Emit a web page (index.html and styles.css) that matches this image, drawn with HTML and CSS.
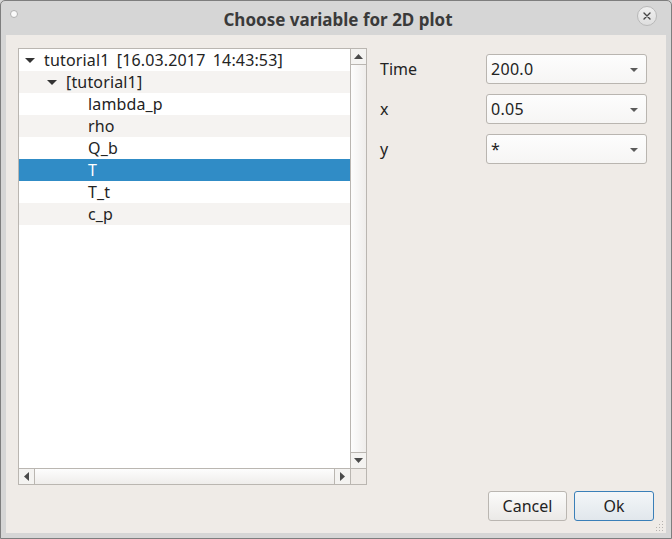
FILE: index.html
```html
<!DOCTYPE html>
<html>
<head>
<meta charset="utf-8">
<link rel="stylesheet" href="styles.css">
</head>
<body>
<div class="window">
  <div class="titlebar">
    <span class="dot"></span>
    <span class="title">Choose variable for 2D plot</span>
    <span class="close"><svg width="8" height="8" viewBox="0 0 8 8"><path d="M1 1L7 7M7 1L1 7" stroke="#444" stroke-width="1.4" stroke-linecap="round"/></svg></span>
  </div>
  <div class="client">
    <div class="main">
      <div class="tree">
        <div class="viewport">
          <div class="row"><span class="exp"></span>tutorial1 [16.03.2017 14:43:53]</div>
          <div class="row alt lvl1"><span class="exp"></span>[tutorial1]</div>
          <div class="row lvl2">lambda_p</div>
          <div class="row alt lvl2">rho</div>
          <div class="row lvl2">Q_b</div>
          <div class="row sel lvl2">T</div>
          <div class="row lvl2">T_t</div>
          <div class="row alt lvl2">c_p</div>
        </div>
        <div class="vscroll">
          <div class="sbtn up"><svg width="9" height="5" viewBox="0 0 9 5"><path d="M4.5 0L9 5H0Z" fill="#4a4a4a"/></svg></div>
          <div class="trough-v"></div>
          <div class="sbtn down"><svg width="9" height="5" viewBox="0 0 9 5"><path d="M0 0H9L4.5 5Z" fill="#4a4a4a"/></svg></div>
        </div>
        <div class="hscroll">
          <div class="sbtn left"><svg width="5" height="9" viewBox="0 0 5 9"><path d="M5 0V9L0 4.5Z" fill="#4a4a4a"/></svg></div>
          <div class="trough-h"></div>
          <div class="sbtn right"><svg width="5" height="9" viewBox="0 0 5 9"><path d="M0 0L5 4.5L0 9Z" fill="#4a4a4a"/></svg></div>
        </div>
        <div class="corner"></div>
      </div>
      <div class="form">
        <div class="field"><span class="label">Time</span><div class="combo"><span>200.0</span><span class="arrow"></span></div></div>
        <div class="field"><span class="label">x</span><div class="combo"><span>0.05</span><span class="arrow"></span></div></div>
        <div class="field"><span class="label">y</span><div class="combo"><span>*</span><span class="arrow"></span></div></div>
      </div>
    </div>
    <div class="buttons">
      <button class="btn">Cancel</button>
      <button class="btn default">Ok</button>
    </div>
    <svg class="grip" width="10" height="10" viewBox="0 0 10 10">
      <g fill="#b5b2ae">
        <rect x="8" y="0" width="1" height="1"/>
        <rect x="5" y="3" width="1" height="1"/><rect x="8" y="3" width="1" height="1"/>
        <rect x="2" y="6" width="1" height="1"/><rect x="5" y="6" width="1" height="1"/><rect x="8" y="6" width="1" height="1"/>
        <rect x="-1" y="9" width="1" height="1"/><rect x="2" y="9" width="1" height="1"/><rect x="5" y="9" width="1" height="1"/><rect x="8" y="9" width="1" height="1"/>
      </g>
    </svg>
  </div>
</div>
</body>
</html>
```
FILE: styles.css
```css
html, body {
  margin: 0;
  padding: 0;
  background: #d6d6d6;
}
.window {
  width: 672px;
  height: 539px;
  box-sizing: border-box;
  border: 1px solid #7e7e7e;
  border-radius: 5px 5px 0 0;
  background: #d6d6d6;
  display: flex;
  flex-direction: column;
  font-family: "Noto Sans", "DejaVu Sans", sans-serif;
  font-size: 16px;
  color: #232323;
}
.titlebar {
  height: 34px;
  display: flex;
  align-items: center;
  position: relative;
  justify-content: center;
}
.title {
  font-weight: bold;
  font-size: 17px;
  color: #3a3a3a;
  padding-top: 2px;
  padding-left: 4px;
}
.dot {
  position: absolute;
  left: 9px;
  top: 9px;
  width: 6px;
  height: 6px;
  border-radius: 50%;
  background: #fafafa;
  border: 1px solid #b0b0b0;
}
.close {
  position: absolute;
  right: 14px;
  top: 5px;
  width: 18px;
  height: 18px;
  border-radius: 50%;
  border: 1px solid #b9b9b9;
  background: linear-gradient(#f0f0f0, #dedede);
  display: flex;
  align-items: center;
  justify-content: center;
}
.client {
  flex: 1;
  margin: 0 5px 5px 5px;
  background: #efebe7;
  padding: 13px 12px 12px 12px;
  display: flex;
  flex-direction: column;
  position: relative;
}
.main {
  flex: 1;
  display: flex;
}
.tree {
  width: 350px;
  height: 437px;
  box-sizing: border-box;
  border: 1px solid #bab6b1;
  display: grid;
  grid-template-columns: 1fr 16px;
  grid-template-rows: 1fr 16px;
  background: #fff;
}
.viewport {
  overflow: hidden;
}
.row {
  height: 22px;
  line-height: 22px;
  padding-left: 25px;
  white-space: nowrap;
  background: #fff;
  display: flex;
  align-items: center;
  word-spacing: 3px;
  letter-spacing: 0.15px;
}
.row.alt { background: #f5f3f1; }
.row.sel { background: #308cc6; color: #fff; }
.row.lvl1 { padding-left: 47px; }
.row.lvl2 { padding-left: 69px; }
.row .exp {
  width: 0;
  height: 0;
  border-left: 5px solid transparent;
  border-right: 5px solid transparent;
  border-top: 5px solid #333;
  margin-right: 9px;
  margin-left: -19px;
  margin-top: 1px;
}
.vscroll {
  border-left: 1px solid #bab6b1;
  display: flex;
  flex-direction: column;
  background: linear-gradient(to right, #fdfdfd, #efedeb);
}
.trough-v { flex: 1; }
.sbtn {
  display: flex;
  align-items: center;
  justify-content: center;
  box-sizing: border-box;
}
.sbtn.up { height: 16px; border-bottom: 1px solid #bab6b1; background: #f4f3f1; }
.sbtn.down { height: 16px; border-top: 1px solid #bab6b1; background: #f4f3f1; }
.hscroll {
  border-top: 1px solid #bab6b1;
  display: flex;
  background: linear-gradient(#fdfdfd, #efedeb);
}
.trough-h { flex: 1; }
.sbtn.left { width: 16px; border-right: 1px solid #bab6b1; background: #f4f3f1; }
.sbtn.right { width: 16px; border-left: 1px solid #bab6b1; background: #f4f3f1; }
.corner {
  border-top: 1px solid #bab6b1;
  border-left: 1px solid #bab6b1;
  background: #efebe7;
}
.form {
  flex: 1;
  padding: 6px 7px 0 13px;
  display: flex;
  flex-direction: column;
  gap: 10px;
}
.field {
  display: flex;
  align-items: center;
  height: 30px;
}
.label {
  width: 106px;
}
.combo {
  width: 161px;
  height: 30px;
  box-sizing: border-box;
  border: 1px solid #b9b5b0;
  border-radius: 3px;
  background: linear-gradient(#fdfdfd, #f6f5f4);
  display: flex;
  align-items: center;
  justify-content: space-between;
  padding: 0 8px 0 4px;
  letter-spacing: 0.3px;
}
.arrow {
  width: 0;
  height: 0;
  border-left: 4px solid transparent;
  border-right: 4px solid transparent;
  border-top: 4px solid #5a5a5a;
  margin-top: 2px;
}
.buttons {
  display: flex;
  justify-content: flex-end;
  gap: 7px;
  margin-top: 6px;
}
.btn {
  font-family: "Noto Sans", "DejaVu Sans", sans-serif;
  font-size: 16px;
  color: #232323;
  width: 79px;
  height: 30px;
  box-sizing: border-box;
  border: 1px solid #bab6b1;
  border-radius: 3px;
  background: linear-gradient(#fbfbfa, #ebe9e7);
  padding: 0;
}
.btn.default {
  width: 80px;
  border-color: #3a7fb8;
  background: linear-gradient(#f3f6f8, #e1e7ec);
}
.grip {
  position: absolute;
  right: 2px;
  bottom: 2px;
}
```
